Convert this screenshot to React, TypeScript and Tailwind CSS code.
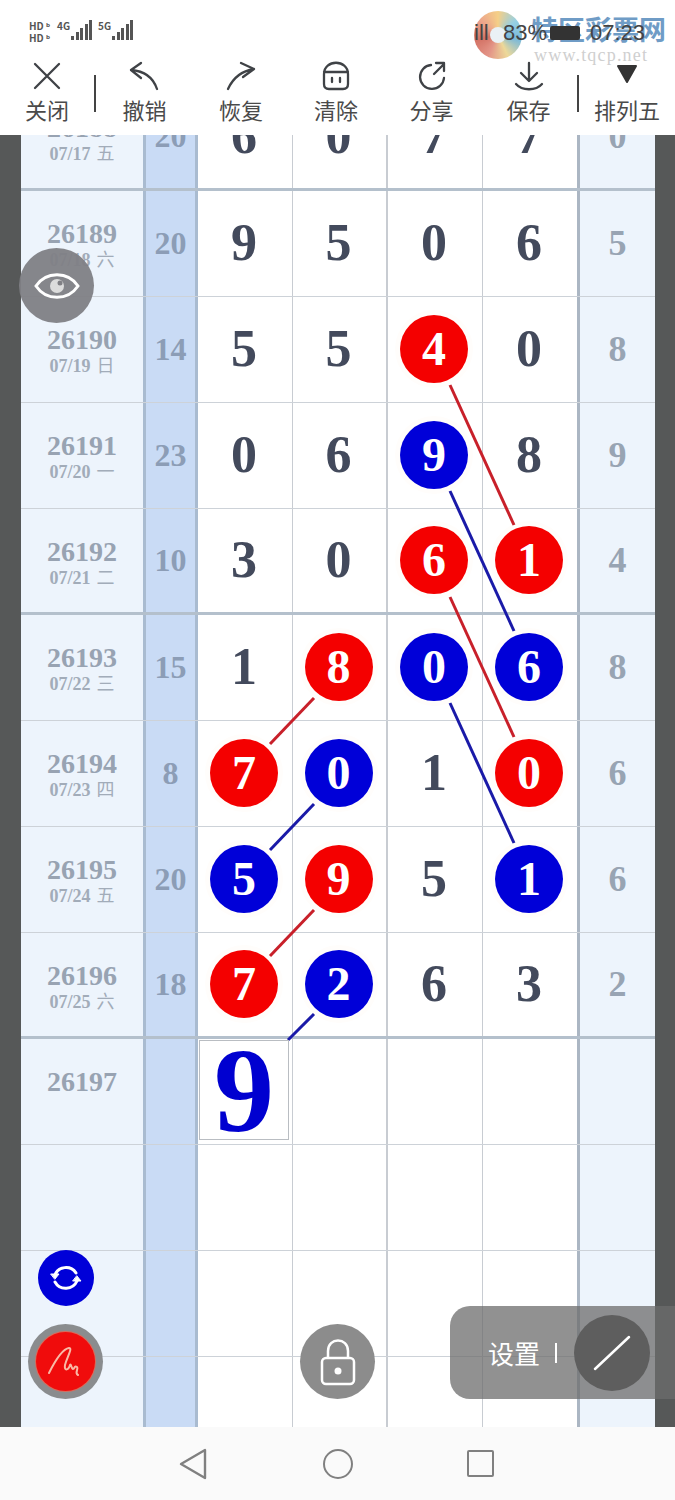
import React from 'react';

const CJK = "font-['Noto_Sans_CJK_SC','Noto_Sans',sans-serif]";
const SERIF = "font-['Liberation_Serif','Noto_Sans_CJK_SC',serif]";

type Cell = number | string | null;

interface RowData {
  issue: string;
  date?: string;
  day?: string;
  sum?: string;
  cells: Cell[];
  tail?: string;
  heavy?: boolean;
}

// r / b marks a drawn ball, a plain number stays a plain digit
const rows: RowData[] = [
  { issue: '26188', date: '07/17', day: '五', sum: '20', cells: [6, 0, 7, 7], tail: '0', heavy: true },
  { issue: '26189', date: '07/18', day: '六', sum: '20', cells: [9, 5, 0, 6], tail: '5' },
  { issue: '26190', date: '07/19', day: '日', sum: '14', cells: [5, 5, 'r4', 0], tail: '8' },
  { issue: '26191', date: '07/20', day: '一', sum: '23', cells: [0, 6, 'b9', 8], tail: '9' },
  { issue: '26192', date: '07/21', day: '二', sum: '10', cells: [3, 0, 'r6', 'r1'], tail: '4', heavy: true },
  { issue: '26193', date: '07/22', day: '三', sum: '15', cells: [1, 'r8', 'b0', 'b6'], tail: '8' },
  { issue: '26194', date: '07/23', day: '四', sum: '8', cells: ['r7', 'b0', 1, 'r0'], tail: '6' },
  { issue: '26195', date: '07/24', day: '五', sum: '20', cells: ['b5', 'r9', 5, 'b1'], tail: '6' },
  { issue: '26196', date: '07/25', day: '六', sum: '18', cells: ['r7', 'b2', 6, 3], tail: '2', heavy: true },
  { issue: '26197', cells: [null, null, null, null] },
  { issue: '', cells: [null, null, null, null] },
  { issue: '', cells: [null, null, null, null] },
  { issue: '', cells: [null, null, null, null] },
];

const links = [
  { x1: 450, y1: 385, x2: 514, y2: 525, c: '#c8202a' },
  { x1: 450, y1: 491, x2: 514, y2: 631, c: '#1a1aa8' },
  { x1: 450, y1: 597, x2: 514, y2: 737, c: '#c8202a' },
  { x1: 450, y1: 703, x2: 514, y2: 843, c: '#1a1aa8' },
  { x1: 314, y1: 698, x2: 270, y2: 744, c: '#c8202a' },
  { x1: 314, y1: 804, x2: 270, y2: 850, c: '#1a1aa8' },
  { x1: 314, y1: 910, x2: 270, y2: 956, c: '#c8202a' },
  { x1: 314, y1: 1014, x2: 288, y2: 1040, c: '#1a1aa8' },
];

const Ic: React.FC<{ children: React.ReactNode }> = ({ children }) => (
  <svg width="32" height="32" viewBox="0 0 32 32" fill="none" stroke="#3f4246" strokeWidth="2.3" strokeLinecap="round" strokeLinejoin="round">
    {children}
  </svg>
);

const tools: { label: string; w: string; icon: React.ReactNode }[] = [
  { label: '关闭', w: 'w-[94px]', icon: <Ic><path d="M4 4 L28 28 M28 4 L4 28" /></Ic> },
  { label: '撤销', w: 'w-[97px]', icon: <Ic><path d="M12 3 L2 10 L12 18 M2 10 C16 11 24 17 28 29" /></Ic> },
  { label: '恢复', w: 'w-[96px]', icon: <Ic><path d="M16 3 L29 9 L18 17 M29 9 C16 11 8 18 3 29" /></Ic> },
  { label: '清除', w: 'w-[94px]', icon: <Ic><path d="M4 14 C4 -1 28 -1 28 14 V24 Q28 29 23 29 H9 Q4 29 4 24 Z M4 12 H28 M12 18 V22 M20 18 V22" /></Ic> },
  { label: '分享', w: 'w-[97px]', icon: <Ic><path d="M15 5 A12 12 0 1 0 28 18 M18 14 L28 4 M20 3 H28 V11" /></Ic> },
  { label: '保存', w: 'w-[97px]', icon: <Ic><path d="M16 3 V21 M8 13 L16 21 L24 13 M3 24 C9 31 23 31 29 24" /></Ic> },
];

const Ball: React.FC<{ color: 'r' | 'b'; n: string }> = ({ color, n }) => (
  <div className={`w-[68px] h-[68px] shrink-0 rounded-full flex items-center justify-center text-white text-[48px] font-bold leading-none shadow-[0_0_0_5px_#fffdfb] ${color === 'r' ? 'bg-[#f40000]' : 'bg-[#0000d8]'}`}>
    {n}
  </div>
);

const Row: React.FC<{ row: RowData }> = ({ row }) => {
  const bottom = row.heavy ? 'border-b-[3px] border-b-[#b4c0cc]' : 'border-b border-b-[#cdd2d8]';
  return (
    <div className={`grid grid-cols-[122px_55px_95px_95px_95px_94px_78px] h-[106px] ${bottom}`}>
      <div className="bg-[#edf4fc] flex flex-col items-center pt-[26px]">
        <span className={`${SERIF} text-[28px] font-bold leading-[34px] text-[#98a3b2]`}>{row.issue}</span>
        {row.date && (
          <span className={`${SERIF} text-[18px] font-bold leading-[20px] text-[#a2acb9] -mt-[1px]`}>
            {row.date}
            <span className="font-normal ml-[6px]">{row.day}</span>
          </span>
        )}
      </div>
      <div className="bg-[#c9dbf5] border-x-[3px] border-x-[#a9bbd0] flex items-center justify-center pb-[2px]">
        <span className={`${SERIF} text-[32px] font-bold text-[#8c9db6]`}>{row.sum}</span>
      </div>
      {row.cells.map((c, i) => (
        <div key={i} className={`bg-white flex items-center justify-center pb-[2px] pr-[2px] ${SERIF} ${i < 3 ? 'border-r border-r-[#c8ccd2]' : ''} ${i === 1 ? 'border-r-2' : ''}`}>
          {typeof c === 'string' ? (
            <Ball color={c[0] as 'r' | 'b'} n={c[1]} />
          ) : (
            <span className="text-[52px] font-bold leading-none text-[#434a5c]">{c}</span>
          )}
        </div>
      ))}
      <div className="bg-[#edf4fc] border-l-[3px] border-l-[#abb6c3] flex items-center justify-center pb-[2px]">
        <span className={`${SERIF} text-[36px] font-bold text-[#98a4b3]`}>{row.tail}</span>
      </div>
    </div>
  );
};

const Signal: React.FC = () => (
  <div className="flex items-end gap-[1.5px]">
    <i className="block w-[3px] h-[4px] bg-[#555]" />
    <i className="block w-[3px] h-[8px] bg-[#555]" />
    <i className="block w-[3px] h-[12px] bg-[#555]" />
    <i className="block w-[3px] h-[16px] bg-[#555]" />
    <i className="block w-[3px] h-[20px] bg-[#555]" />
  </div>
);

export default function App() {
  return (
    <div className={`relative w-[675px] h-[1500px] overflow-hidden bg-white ${CJK}`}>
      {/* top bar */}
      <header className="relative z-20 h-[135px] bg-white">
        <div className="h-[60px] flex items-start pl-[29px] pt-[20px] text-[#555] font-bold text-[10px] leading-[11px]">
          <div className="flex flex-col gap-[1px] w-[28px]">
            <span>HD ᵇ</span>
            <span>HD ᵇ</span>
          </div>
          <div className="flex items-end gap-[1px] w-[41px]"><span className="self-start">4G</span><Signal /></div>
          <div className="flex items-end gap-[1px]"><span className="self-start">5G</span><Signal /></div>
        </div>
        <nav className="flex items-start text-[22px] leading-[30px] text-[#4a4a4a]">
          {tools.map((t, i) => (
            <React.Fragment key={t.label}>
              <div className={`${t.w} flex flex-col items-center`}>
                {t.icon}
                <span className="mt-[2px]">{t.label}</span>
              </div>
              {i === 0 && <div className="w-[2px] h-[37px] bg-[#444] mt-[15px]" />}
            </React.Fragment>
          ))}
          <div className="w-[2px] h-[37px] bg-[#444] mt-[15px]" />
          <div className="flex-1 flex flex-col items-center">
            <svg width="32" height="32" viewBox="0 0 32 32"><path d="M7 6 H25 L16 22 Z" fill="#333" stroke="#333" strokeWidth="2" strokeLinejoin="round" /></svg>
            <span className="mt-[2px]">排列五</span>
          </div>
        </nav>
        {/* site watermark over the status bar */}
        <div className="absolute left-[474px] top-[11px] w-[48px] h-[48px] rounded-full opacity-80 bg-[conic-gradient(#f3c46a,#7cc4dc,#5aa8d0,#e9d080,#dd7a6a,#c9503f,#e88f70,#f3c46a)] flex items-center justify-center">
          <div className="w-[16px] h-[16px] rounded-full bg-[#e6eef3]" />
        </div>
        <div className="absolute left-[531px] top-[12px] text-[27px] leading-[34px] font-bold text-[#6f9cc6]">特区彩票网</div>
        <div className="absolute left-[534px] top-[44px] font-['Liberation_Serif',serif] text-[18px] leading-[22px] text-[#cfcfcf] tracking-[1.2px]">www.tqcp.net</div>
        <div className="absolute left-[474px] top-[20px] flex items-center text-[22px] leading-[26px] text-[#444] font-['Liberation_Sans',sans-serif]">
          <span className="w-[29px]">ill</span>
          <span className="w-[47px]">83%</span>
          <span className="w-[30px] h-[14px] bg-[#333] rounded-[2px] mr-[10px]" />
          <span>07:23</span>
        </div>
      </header>

      {/* table, first row runs under the top bar */}
      <main className="h-[1292px] overflow-hidden bg-[#565858] pl-[21px] pr-[20px]">
        <div className="-mt-[50px]">
          {rows.map((r, i) => (
            <Row key={i} row={r} />
          ))}
        </div>
      </main>

      {/* lines joining the balls */}
      <svg className="absolute inset-0 z-10 pointer-events-none" width="675" height="1500">
        {links.map((l, i) => (
          <line key={i} x1={l.x1} y1={l.y1} x2={l.x2} y2={l.y2} stroke={l.c} strokeWidth="3" />
        ))}
      </svg>

      {/* next pick */}
      <div className={`absolute z-10 left-[199px] top-[1040px] w-[90px] h-[100px] bg-white border border-[#b9bdc2] flex items-center justify-center pt-[2px] ${SERIF} text-[120px] font-bold leading-none text-[#0000d0]`}>
        9
      </div>

      {/* floating controls */}
      <div className="absolute z-10 left-[19px] top-[248px] w-[75px] h-[75px] rounded-full bg-[#808085]/95 flex items-center justify-center">
        <svg width="46" height="32" viewBox="0 0 46 32" fill="none" stroke="#fff" strokeWidth="3">
          <path d="M2 16 C12 1 34 1 44 16 C34 31 12 31 2 16 Z" />
          <circle cx="23" cy="16" r="7" fill="#dcdcdc" stroke="none" />
          <circle cx="26" cy="13" r="2.5" fill="#808085" stroke="none" />
        </svg>
      </div>
      <div className="absolute z-10 left-[38px] top-[1250px] w-[56px] h-[56px] rounded-full bg-[#0000d8] flex items-center justify-center">
        <svg width="32" height="28" viewBox="0 0 32 28" fill="none" stroke="#fff" strokeWidth="3" strokeLinecap="round">
          <path d="M5 11 C8 2 21 1 26 9 M27 17 C23 26 10 27 5 18" />
          <path d="M1 10 L9 10 L5 15 Z M23 17 L31 17 L27 12 Z" fill="#fff" strokeWidth="1" />
        </svg>
      </div>
      <div className="absolute z-10 left-[28px] top-[1324px] w-[75px] h-[75px] rounded-full bg-[#8a8c8e] flex items-center justify-center">
        <div className="w-[59px] h-[59px] rounded-full bg-[#f00c0c] flex items-center justify-center shadow-[0_0_0_1px_#d96a5a]">
          <svg width="38" height="38" viewBox="0 0 38 38" fill="none" stroke="#f9b9a6" strokeWidth="2" strokeLinecap="round" strokeLinejoin="round">
            <path d="M2 30 C8 18 15 6 22 5 C26 5 20 14 18 22 C17 28 21 28 23 22 C24 20 24 25 26 26 C28 26 27 22 30 24 C32 26 27 30 31 32" />
          </svg>
        </div>
      </div>
      <div className="absolute z-10 left-[300px] top-[1324px] w-[75px] h-[75px] rounded-full bg-[#8c8c8c] flex items-center justify-center">
        <svg width="38" height="48" viewBox="0 0 38 48" fill="none" stroke="#fff" strokeWidth="2.5">
          <rect x="3" y="20" width="32" height="26" rx="4" />
          <path d="M9 20 V13 C9 -1 29 -1 29 13 V20" />
          <circle cx="19" cy="33" r="3.5" fill="#fff" stroke="none" />
        </svg>
      </div>
      <div className="absolute z-10 left-[450px] top-[1306px] w-[225px] h-[93px] rounded-l-[20px] bg-[#6c6c6c]/75 flex items-center pl-[38px] text-white text-[26px]">
        <span>设置</span>
        <span className="w-[2px] h-[20px] bg-white ml-[15px]" />
        <div className="ml-[17px] w-[76px] h-[76px] rounded-full bg-[#5e5e5e] flex items-center justify-center">
          <svg width="40" height="36" viewBox="0 0 40 36" stroke="#fff" strokeWidth="2.5" strokeLinecap="round"><path d="M3 34 L37 2" /></svg>
        </div>
      </div>

      {/* system nav */}
      <footer className="relative z-10 h-[73px] bg-[#fafafa] flex items-center">
        <div className="ml-[178px] w-[30px] flex justify-center">
          <svg width="28" height="32" viewBox="0 0 28 32" fill="none" stroke="#808080" strokeWidth="2.4" strokeLinejoin="round"><path d="M2 16 L26 2 V30 Z" /></svg>
        </div>
        <div className="ml-[115px] w-[30px] h-[30px] rounded-full border-[2.5px] border-[#808080]" />
        <div className="ml-[114px] w-[27px] h-[27px] rounded-[2px] border-[2.5px] border-[#808080]" />
      </footer>
    </div>
  );
}
